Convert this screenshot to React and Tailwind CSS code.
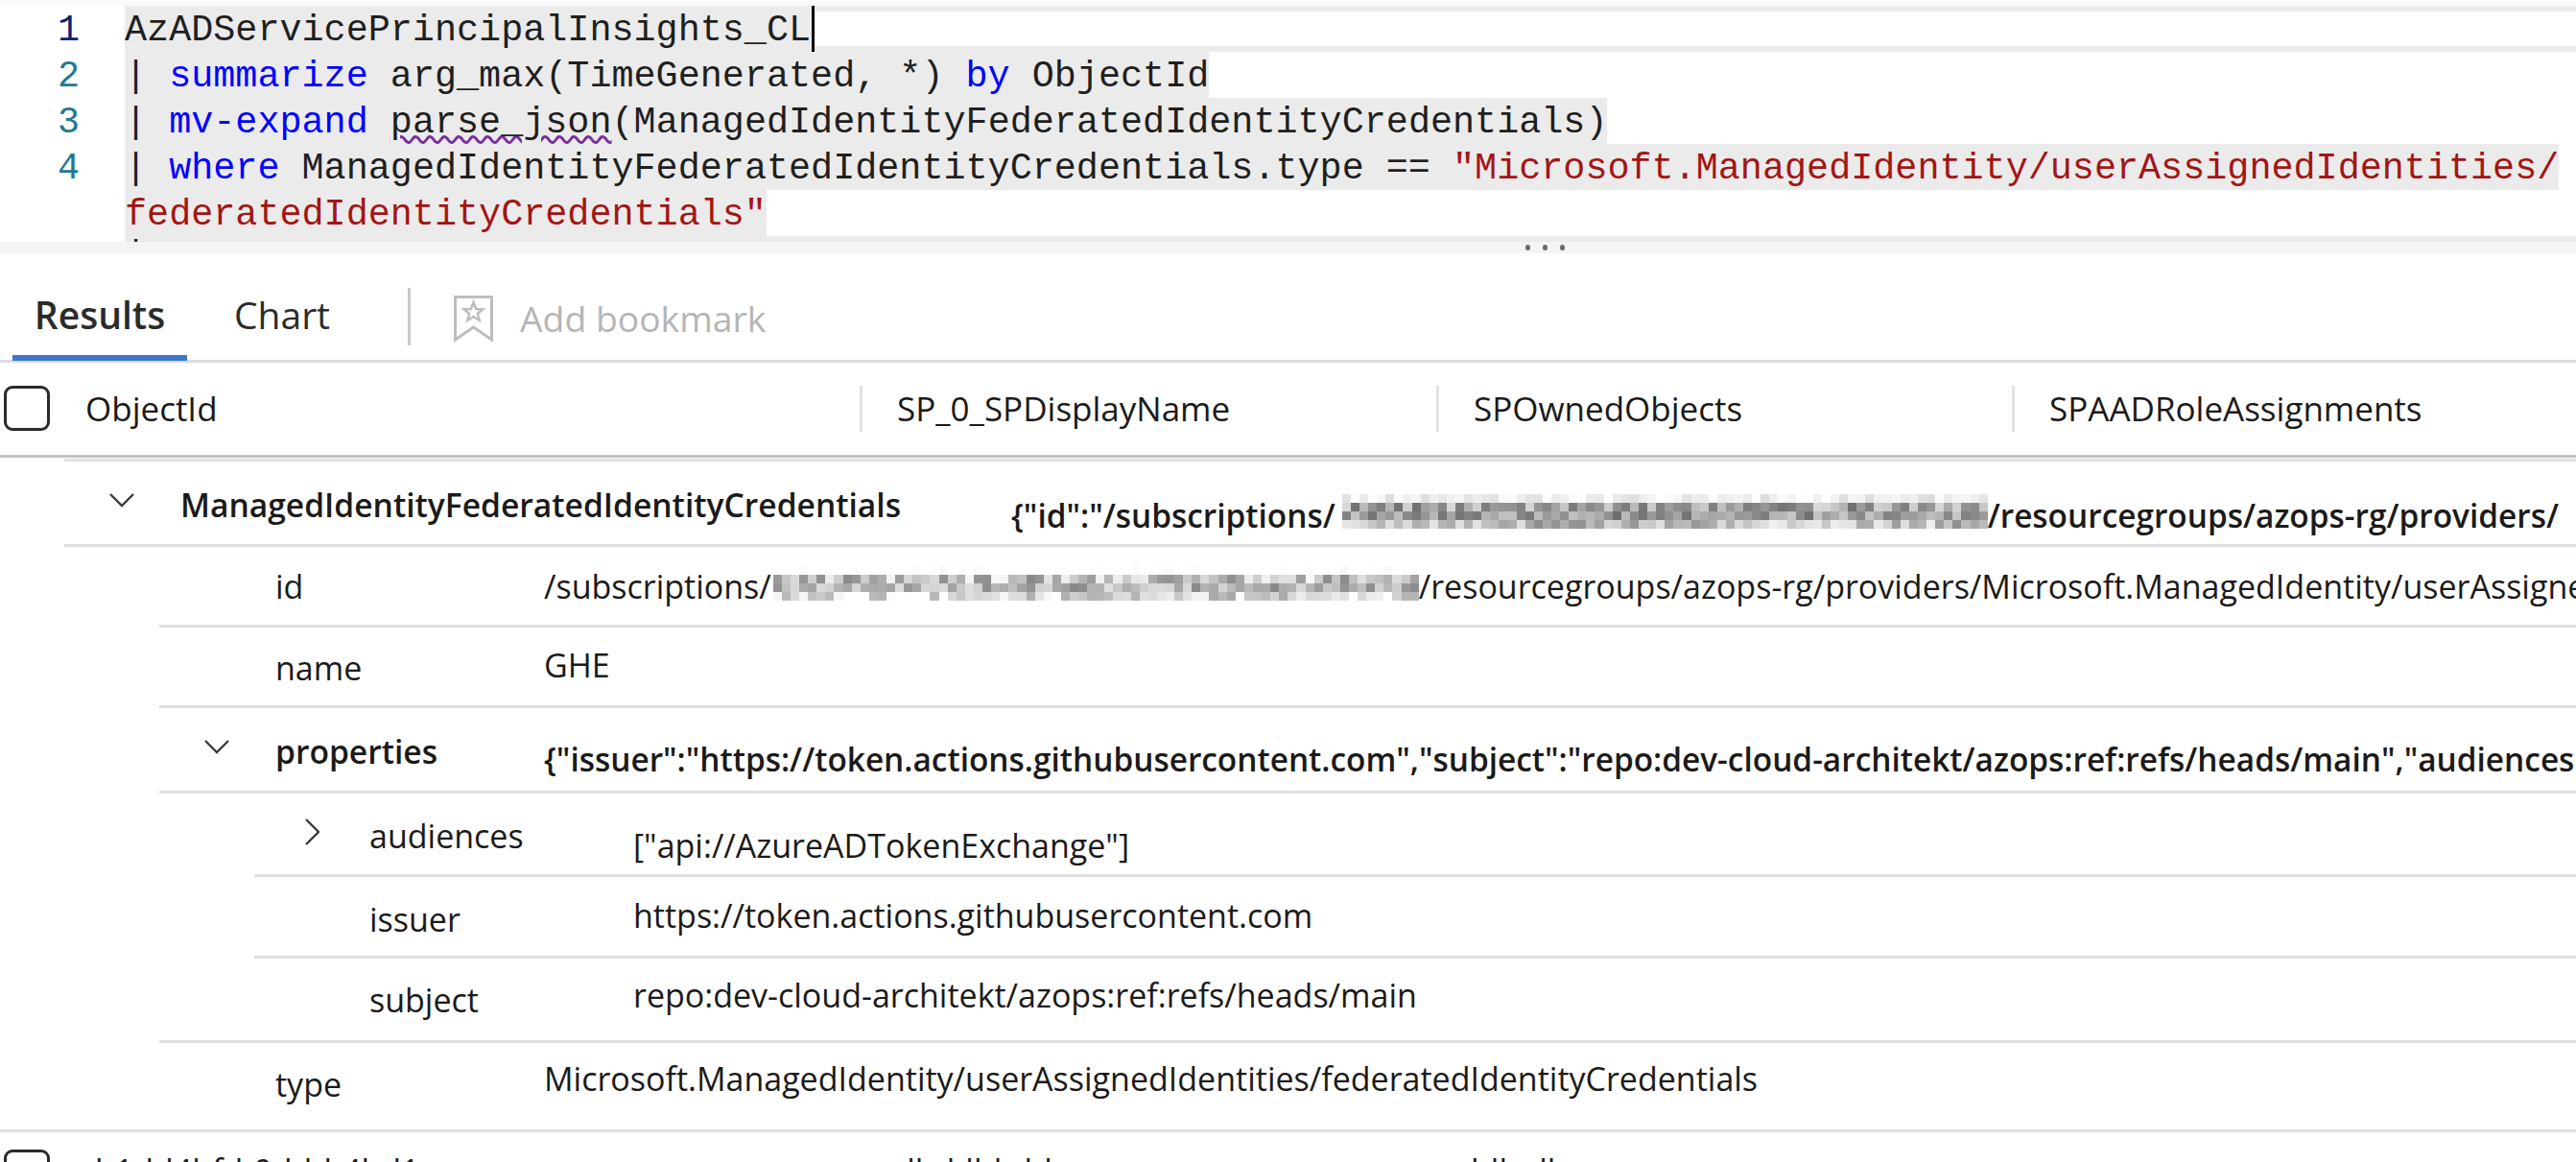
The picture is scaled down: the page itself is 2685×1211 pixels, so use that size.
const uiFont = "font-['Open_Sans','Noto_Sans',sans-serif]";

// pixelated blur over the subscription ids
function Mosaic({ cols, seed, light, className }) {
  const rowBase = [238, 165, 155, 190];
  const rowSpread = [36, 110, 90, 100];
  const cells = [];
  for (let i = 0; i < cols * 4; i++) {
    const n = Math.abs(Math.sin((i + 1) * 12.9898 + seed) * 43758.5453) % 1;
    const row = Math.floor(i / cols);
    const v = Math.min(255, Math.round(rowBase[row] + (light ? 28 : 0) + (n - 0.5) * rowSpread[row]));
    cells.push(
      <span key={i} className="block" style={{ backgroundColor: `rgb(${v},${v},${v})` }} />
    );
  }
  return (
    <span
      className={`inline-grid grid-rows-[repeat(4,9px)] shrink-0 ${className}`}
      style={{ gridTemplateColumns: `repeat(${cols}, 9.1px)` }}
    >
      {cells}
    </span>
  );
}

function ChevronDown() {
  return (
    <svg viewBox="0 0 26 15" className="w-[26px] h-[15px]" fill="none" stroke="#3a3a3a" strokeWidth="2.4">
      <path d="M1 1 L13 13 L25 1" />
    </svg>
  );
}

function ChevronRight() {
  return (
    <svg viewBox="0 0 15 28" className="w-[15px] h-[28px]" fill="none" stroke="#3a3a3a" strokeWidth="2.4">
      <path d="M1 1 L14 14 L1 27" />
    </svg>
  );
}

function CodeLine({ num, children }) {
  return (
    <div className="flex h-[48px]">
      <div className="w-[83px] pt-[5px] text-right text-[#237893]">{num}</div>
      <div className="w-[47px]" />
      <div className="bg-[#ebebeb] whitespace-pre pt-[5px]">{children}</div>
    </div>
  );
}

function Row({ className, slot, slotClass, label, labelClass, value, valueClass }) {
  return (
    <div className={`flex items-center border-b-[3px] border-[#dde0e3] ${className}`}>
      <div className={`shrink-0 ${slotClass}`}>{slot}</div>
      <div className={`shrink-0 ${labelClass}`}>{label}</div>
      <div className={`flex-1 min-w-0 overflow-hidden whitespace-nowrap ${valueClass}`}>{value}</div>
    </div>
  );
}

export default function App() {
  return (
    <div className={`h-[1211px] overflow-hidden bg-white text-[#1b1a19] ${uiFont} text-[34px] leading-[44px]`}>
      {/* query editor */}
      <div className="h-[6px] bg-[#fafafa]" />
      <div className="font-['Liberation_Mono',monospace] text-[38.45px] leading-[43px] text-[#1f1f1f]">
        <div className="flex h-[48px]">
          <div className="w-[83px] pt-[5px] text-right text-[#0b216f]">1</div>
          <div className="w-[47px]" />
          <div className="w-[719px] pt-[5px] bg-[#ebebeb] whitespace-pre border-r-[3px] border-black">AzADServicePrincipalInsights_CL</div>
          <div className="flex-1 flex flex-col justify-between">
            <div className="h-[6px] bg-[#ebebeb]" />
            <div className="h-[6px] bg-[#ebebeb]" />
          </div>
        </div>
        <CodeLine num="2">
          | <span className="text-[#0000ff]">summarize</span> arg_max(TimeGenerated, *) <span className="text-[#0000ff]">by</span> ObjectId
        </CodeLine>
        <CodeLine num="3">
          | <span className="text-[#0000ff]">mv-expand</span> <span className="underline decoration-wavy decoration-[#7b2e9e] decoration-[3px] underline-offset-[3px]">parse_json</span>(ManagedIdentityFederatedIdentityCredentials)
        </CodeLine>
        <CodeLine num="4">
          | <span className="text-[#0000ff]">where</span> ManagedIdentityFederatedIdentityCredentials.type == <span className="text-[#a31515]">"Microsoft.ManagedIdentity/userAssignedIdentities/</span>
        </CodeLine>
        <CodeLine>
          <span className="text-[#a31515]">federatedIdentityCredentials"</span>
        </CodeLine>
        <div className="ml-[130px] h-[6px] overflow-hidden bg-[#ebebeb] leading-[42px]">|</div>
      </div>
      <div className="h-[12px] bg-[#f4f4f4] flex pl-[1590px] gap-[13px] items-center">
        <span className="w-[5px] h-[6px] rounded-full bg-[#6b6b6b]" />
        <span className="w-[5px] h-[6px] rounded-full bg-[#6b6b6b]" />
        <span className="w-[5px] h-[6px] rounded-full bg-[#6b6b6b]" />
      </div>

      {/* tabs */}
      <div className="flex items-start h-[114px] border-b-[3px] border-[#dcdcdc] text-[39px]">
        <div className="ml-[13px] w-[182px] h-[112px] pt-[42px] text-center border-b-[6px] border-[#3a78d0] text-[#2b2b2b] font-semibold">Results</div>
        <div className="ml-[49px] w-[100px] mt-[42px] text-[#2b2b2b]">Chart</div>
        <div className="ml-[81px] mt-[36px] w-[3px] h-[60px] bg-[#c8c8c8]" />
        <svg viewBox="0 0 41 49" className="ml-[45px] mt-[44px] w-[41px] h-[49px]" fill="none" stroke="#bdbdbd" strokeWidth="3">
          <path d="M1.5 1.5 H39.5 V46 L20.5 33 L1.5 46 Z" />
          <path d="M20.5 7 L23.2 14 L30.5 14.4 L24.8 19 L26.7 26 L20.5 22 L14.3 26 L16.2 19 L10.5 14.4 L17.8 14 Z" strokeWidth="2.5" />
        </svg>
        <div className="ml-[28px] mt-[46px] text-[37.3px] text-[#b5b5b5]">Add bookmark</div>
      </div>

      {/* grid header */}
      <div className="flex items-start h-[99px] pt-[24px] border-b-[3px] border-[#c0c4c8] text-[35px] font-medium">
        <div className="ml-[4px] w-[48px] h-[47px] border-[3px] border-[#2b2b2b] rounded-[9px] shrink-0" />
        <div className="ml-[37px] w-[807px] pt-[2px]">ObjectId</div>
        <div className="w-[601px] h-[48px] border-l-[3px] border-[#e0e2e4] pl-[36px] pt-[2px]">SP_0_SPDisplayName</div>
        <div className="w-[600px] h-[48px] border-l-[3px] border-[#e0e2e4] pl-[36px] pt-[2px]">SPOwnedObjects</div>
        <div className="flex-1 h-[48px] border-l-[3px] border-[#e0e2e4] pl-[36px] pt-[2px]">SPAADRoleAssignments</div>
      </div>
      <div className="ml-[67px] mt-[1px] h-[3px] bg-[#dde0e3]" />

      {/* expanded record */}
      <Row
        className="ml-[67px] h-[89px]"
        slotClass="w-[121px] pl-[47px] pb-[6px]"
        slot={<ChevronDown />}
        labelClass="w-[866px] pt-[4px] font-semibold text-[33.6px]"
        label="ManagedIdentityFederatedIdentityCredentials"
        valueClass="pt-[26px] font-semibold text-[33.4px] flex items-start"
        value={
          <>
            {'{"id":"/subscriptions/'}
            <Mosaic cols={74} seed={3} className="ml-[7px]" />
            /resourcegroups/azops-rg/providers/
          </>
        }
      />
      <Row
        className="ml-[166px] h-[84px]"
        slotClass="w-[121px]"
        labelClass="w-[280px]"
        label="id"
        valueClass="flex items-start"
        value={
          <>
            /subscriptions/
            <Mosaic cols={74} seed={8} light className="mt-[1px] ml-[2px]" />
            /resourcegroups/azops-rg/providers/Microsoft.ManagedIdentity/userAssignedIdentities/ghe
          </>
        }
      />
      <Row
        className="ml-[166px] h-[84px]"
        slotClass="w-[121px]"
        labelClass="w-[280px] pt-[3px]"
        label="name"
        valueClass="pb-[3px]"
        value="GHE"
      />
      <Row
        className="ml-[166px] h-[89px]"
        slotClass="w-[121px] pl-[47px] pb-[6px]"
        slot={<ChevronDown />}
        labelClass="w-[280px] pt-[4px] font-semibold text-[33.6px]"
        label="properties"
        valueClass="pt-[20px] font-semibold text-[33.4px]"
        value={'{"issuer":"https://token.actions.githubusercontent.com","subject":"repo:dev-cloud-architekt/azops:ref:refs/heads/main","audiences":["api://AzureADTokenExchange"]}'}
      />
      <Row
        className="ml-[265px] h-[87px]"
        slotClass="w-[120px] pl-[53px] pb-[4px]"
        slot={<ChevronRight />}
        labelClass="w-[275px] pt-[4px]"
        label="audiences"
        valueClass="pt-[24px]"
        value={'["api://AzureADTokenExchange"]'}
      />
      <Row
        className="ml-[265px] h-[85px]"
        slotClass="w-[120px]"
        labelClass="w-[275px] pt-[5px]"
        label="issuer"
        valueClass="pb-[3px]"
        value="https://token.actions.githubusercontent.com"
      />
      <Row
        className="ml-[166px] h-[88px]"
        slotClass="w-[219px]"
        labelClass="w-[275px]"
        label="subject"
        valueClass="pb-[9px]"
        value="repo:dev-cloud-architekt/azops:ref:refs/heads/main"
      />
      <Row
        className="h-[93px]"
        slotClass="w-[287px]"
        labelClass="w-[280px] pb-[5px]"
        label="type"
        valueClass="pb-[17px]"
        value="Microsoft.ManagedIdentity/userAssignedIdentities/federatedIdentityCredentials"
      />

      {/* next record, cut off by the window */}
      <div className="flex pt-[18px]">
        <div className="ml-[4px] w-[48px] h-[47px] border-[3px] border-[#2b2b2b] rounded-[9px] shrink-0" />
        <div className="ml-[47px] w-[834px] whitespace-nowrap overflow-hidden">b1dd4bfd-0ddd-4bd1</div>
        <div className="w-[600px] overflow-hidden whitespace-nowrap">dbd-lbl-dd</div>
        <div className="flex-1 overflow-hidden whitespace-nowrap">ldb dl</div>
      </div>
    </div>
  );
}
